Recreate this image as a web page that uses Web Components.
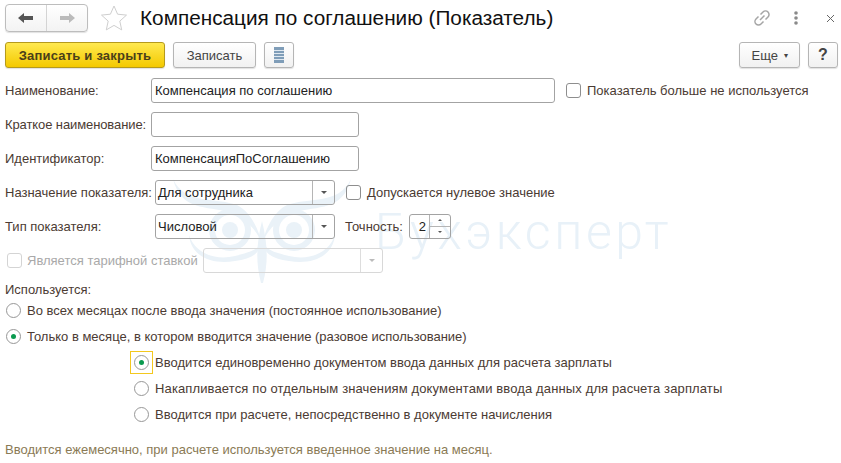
<!DOCTYPE html>
<html>
<head>
<meta charset="utf-8">
<style>
  html, body { margin: 0; background: #fff; }
  body { font: 13px "Liberation Sans", sans-serif; color: #4b3b33; }
</style>
</head>
<body>
<metric-form></metric-form>
<script>
const ICON_ARROW_L = `<svg width="18" height="14" viewBox="0 0 18 14"><path d="M1 7 7 2v3h9v4H7v3z" fill="#555"/></svg>`;
const ICON_ARROW_R = `<svg width="18" height="14" viewBox="0 0 18 14"><path d="M17 7 11 2v3H2v4h9v3z" fill="#bbb"/></svg>`;
const OWL_HALF = `
    <circle cx="65" cy="55" r="18" fill="none" stroke="#eaf2f8" stroke-width="6"/>
    <circle cx="65" cy="55" r="8"/>
    <path d="M8 4C20 30 50 22 72 30 84 36 92 50 97 68 90 52 78 42 64 37 42 31 16 36 8 4Z"/>
    <path d="M24 60C30 78 50 86 70 81 82 78 90 76 95 70 94 80 84 84 70 86 48 90 26 82 24 60Z"/>`;

class UiButton extends HTMLElement {
    constructor(){
        super();
        this.attachShadow({mode:'open'});
        this.shadowRoot.innerHTML = `
        <style>
            :host{
                display: inline-flex;
                align-items: center;
                justify-content: center;
                box-sizing: border-box;
                height: 26px;
                border: 1px solid #b5b5b5;
                border-radius: 3px;
                background: linear-gradient(#fff, #f1f1f1);
                color: #444;
                font: 13px "Liberation Sans", sans-serif;
                box-shadow: 0 1px 1px rgba(0,0,0,.12);
            }
            :host([primary]){
                background: linear-gradient(#ffe94f, #f4c900);
                border-color: #b59a1c;
                color: #4a3f1a;
                font-weight: 700;
                letter-spacing: .2px;
            }
        </style>
        <slot></slot>`;
    }
}

class ComboBox extends HTMLElement {
    constructor(){
        super();
        this.attachShadow({mode:'open'});
        this.shadowRoot.innerHTML = `
        <style>
            :host{
                display: inline-flex;
                box-sizing: border-box;
                height: 25px;
                border: 1px solid #a3a3a3;
                border-radius: 3px;
                color: #222;
                font: 13px "Liberation Sans", sans-serif;
            }
            :host([disabled]){ border-color: #d8d8d8; }
            .val{ flex: 1; padding: 0 2px; line-height: 23px; white-space: nowrap; }
            .btn{
                width: 21px;
                border-left: 1px solid #b5b5b5;
                display: flex;
                align-items: center;
                justify-content: center;
            }
            :host([disabled]) .btn{ border-color: #ddd; }
            .btn i{
                border: 3px solid transparent;
                border-top: 3px solid #555;
                border-bottom: 0;
            }
            :host([disabled]) .btn i{ border-top-color: #bbb; }
        </style>
        <div class="val"><slot></slot></div>
        <div class="btn"><i></i></div>`;
    }
}

class TextField extends HTMLElement {
    constructor(){
        super();
        this.attachShadow({mode:'open'});
        this.shadowRoot.innerHTML = `
        <style>
            :host{
                display: block;
                box-sizing: border-box;
                height: 25px;
                border: 1px solid #a3a3a3;
                border-radius: 3px;
                padding: 0 3px;
                color: #222;
                font: 13px/23px "Liberation Sans", sans-serif;
                white-space: nowrap;
            }
        </style>
        <slot></slot>`;
    }
}

class SpinField extends HTMLElement {
    constructor(){
        super();
        this.attachShadow({mode:'open'});
        this.shadowRoot.innerHTML = `
        <style>
            :host{
                display: inline-flex;
                box-sizing: border-box;
                height: 25px;
                border: 1px solid #a3a3a3;
                border-radius: 3px;
                color: #222;
                font: 13px/23px "Liberation Sans", sans-serif;
            }
            .val{ flex: 1; text-align: right; padding-right: 3px; }
            .btns{ width: 20px; border-left: 1px solid #b5b5b5; display: flex; flex-direction: column; }
            .btns div{ flex: 1; display: flex; align-items: center; justify-content: center; }
            .btns div + div{ border-top: 1px solid #b5b5b5; }
            .up{ border: 2px solid transparent; border-bottom: 2px solid #555; border-top: 0; }
            .down{ border: 2px solid transparent; border-top: 2px solid #555; border-bottom: 0; }
        </style>
        <div class="val"><slot></slot></div>
        <div class="btns"><div><i class="up"></i></div><div><i class="down"></i></div></div>`;
    }
}

class CheckField extends HTMLElement {
    constructor(){
        super();
        this.attachShadow({mode:'open'});
        this.shadowRoot.innerHTML = `
        <style>
            :host{
                display: inline-flex;
                align-items: center;
                gap: 6px;
                height: 25px;
                font: 13px "Liberation Sans", sans-serif;
                color: #4b3b33;
                white-space: nowrap;
            }
            :host([disabled]){ color: #a9a9a9; gap: 5px; }
            .box{
                box-sizing: border-box;
                width: 15px;
                height: 15px;
                border: 1px solid #8e8e8e;
                border-radius: 3px;
            }
            :host([disabled]) .box{ border-color: #d4d4d4; }
        </style>
        <span class="box"></span><slot></slot>`;
    }
}

class RadioField extends HTMLElement {
    constructor(){
        super();
        this.attachShadow({mode:'open'});
        this.shadowRoot.innerHTML = `
        <style>
            :host{
                display: flex;
                align-items: center;
                height: 26px;
                gap: 2px;
                font: 13px "Liberation Sans", sans-serif;
                color: #4b3b33;
                white-space: nowrap;
            }
            .wrap{
                box-sizing: border-box;
                width: 23px;
                height: 23px;
                margin-left: -3px;
                display: flex;
                align-items: center;
                justify-content: center;
                border: 1px solid transparent;
            }
            :host([focused]) .wrap{ border-color: #f3c81e; }
            .dot{
                box-sizing: border-box;
                width: 15px;
                height: 15px;
                border: 1px solid #979797;
                border-radius: 50%;
                display: flex;
                align-items: center;
                justify-content: center;
            }
            :host([checked]) .dot::after{
                content: '';
                width: 5px;
                height: 5px;
                border-radius: 50%;
                background: #0a9a4f;
            }
        </style>
        <span class="wrap"><span class="dot"></span></span><slot></slot>`;
    }
}

class MetricForm extends HTMLElement {
    constructor(){
        super();
        this.attachShadow({mode:'open'});
        this.shadowRoot.innerHTML = `
        <style>
            :host{
                display: block;
                position: relative;
                width: 841px;
                height: 463px;
                overflow: hidden;
                font: 13px "Liberation Sans", sans-serif;
                color: #4b3b33;
            }
            .mark{ position: absolute; left: 165px; top: 175px; }
            .mark-text{
                position: absolute; left: 375px; top: 203px;
                font: 300 50px Roboto, "Liberation Sans", sans-serif;
                letter-spacing: 3.6px;
                color: #e8f1f8;
            }
            .content{ position: relative; padding: 4px 3px 0 5px; }
            .head{ display: flex; align-items: center; height: 28px; }
            .nav{
                display: flex;
                box-sizing: border-box;
                width: 83px; height: 28px;
                border: 1px solid #bdbdbd;
                border-radius: 4px;
                background: linear-gradient(#fff, #f3f3f3);
                box-shadow: 0 1px 1px rgba(0,0,0,.12);
            }
            .nav div{ flex: 1; display: flex; align-items: center; justify-content: center; }
            .nav div + div{ border-left: 1px solid #d4d4d4; }
            .star{ margin-left: 12px; }
            h1{
                margin: 0 0 0 12px;
                font: 400 20.75px "Liberation Sans", sans-serif;
                color: #111;
                white-space: nowrap;
            }
            .head-tools{ margin-left: auto; display: flex; align-items: center; padding-right: 3px; }
            .head-tools .dots{ margin-left: 22px; }
            .head-tools .close{ margin-left: 28px; }
            .bar{ display: flex; align-items: center; margin-top: 10px; height: 26px; }
            .bar .right{ margin-left: auto; display: flex; gap: 8px; }
            .rows{ margin-top: 5px; }
            .row{ display: flex; align-items: center; height: 34px; white-space: nowrap; }
            .lbl{ width: 146px; flex: none; }
            .gap{ margin-left: 4px; }
        </style>
        <svg class="mark" width="190" height="115" viewBox="0 0 190 115" fill="#eaf2f8">
            <g>${OWL_HALF}</g>
            <g transform="translate(194,0) scale(-1,1)">${OWL_HALF}</g>
            <path d="M97 46C102 66 104 86 98 108H96C90 86 92 66 97 46Z"/>
        </svg>
        <div class="mark-text">Бухэксперт</div>
        <div class="content">
            <div class="head">
                <div class="nav"><div>${ICON_ARROW_L}</div><div>${ICON_ARROW_R}</div></div>
                <svg class="star" width="28" height="28" viewBox="0 0 28 28"><path d="M14 2l3.600 8.200 8.900.9-6.700 6 1.900 8.800L14 21.400 6.300 25.900l1.900-8.800-6.700-6 8.900-.9z" fill="none" stroke="#cfcfcf"/></svg>
                <h1>Компенсация по соглашению (Показатель)</h1>
                <div class="head-tools">
                    <svg width="20" height="20" viewBox="0 0 20 20" fill="none" stroke="#a5a5a5" stroke-width="1.500"><path d="M8 12 12.500 7.500M8.500 6.500l2.500-2.500a3.200 3.200 0 0 1 5 5l-2.500 2.500M11.500 13.500 9 16a3.200 3.200 0 0 1-5-5l2.500-2.500"/></svg>
                    <svg class="dots" width="4" height="14" viewBox="0 0 4 14" fill="#8a8a8a"><circle cx="2" cy="2" r="1.800"/><circle cx="2" cy="7" r="1.800"/><circle cx="2" cy="12" r="1.800"/></svg>
                    <svg class="close" width="9" height="9" viewBox="0 0 9 9" stroke="#666"><path d="M1 1l7 7M8 1 1 8"/></svg>
                </div>
            </div>
            <div class="bar">
                <ui-button primary style="width:160px">Записать и закрыть</ui-button>
                <ui-button style="width:83px;margin-left:8px">Записать</ui-button>
                <ui-button style="width:30px;margin-left:8px">
                    <svg width="10" height="16" viewBox="0 0 10 16"><rect width="10" height="16" fill="#7f9db8"/><path d="M0 3.500h10M0 6.500h10M0 9.500h10M0 12.500h10" stroke="#dfe8f0"/></svg>
                </ui-button>
                <div class="right">
                    <ui-button style="width:61px">Еще&nbsp;<span style="font-size:8px;margin-left:2px">▾</span></ui-button>
                    <ui-button style="width:30px;font-weight:700;font-size:16px">?</ui-button>
                </div>
            </div>
            <div class="rows">
                <div class="row">
                    <span class="lbl">Наименование:</span>
                    <text-field style="width:404px">Компенсация по соглашению</text-field>
                    <check-field style="margin-left:11px">Показатель больше не используется</check-field>
                </div>
                <div class="row">
                    <span class="lbl" style="letter-spacing:-.1px">Краткое наименование:</span>
                    <text-field style="width:208px"></text-field>
                </div>
                <div class="row">
                    <span class="lbl">Идентификатор:</span>
                    <text-field style="width:208px">КомпенсацияПоСоглашению</text-field>
                </div>
                <div class="row">
                    <span class="lbl">Назначение показателя:</span>
                    <combo-box class="gap" style="width:180px">Для сотрудника</combo-box>
                    <check-field style="margin-left:11px">Допускается нулевое значение</check-field>
                </div>
                <div class="row">
                    <span class="lbl">Тип показателя:</span>
                    <combo-box class="gap" style="width:180px">Числовой</combo-box>
                    <span style="margin-left:10px">Точность:</span>
                    <spin-field style="width:42px;margin-left:6px">2</spin-field>
                </div>
                <div class="row">
                    <check-field disabled style="width:196px;margin-left:2px">Является тарифной ставкой</check-field>
                    <combo-box disabled style="width:180px"></combo-box>
                </div>
            </div>
            <div style="margin-top:5px">Используется:</div>
            <radio-field>Во всех месяцах после ввода значения (постоянное использование)</radio-field>
            <radio-field checked>Только в месяце, в котором вводится значение (разовое использование)</radio-field>
            <div style="margin-left:128px">
                <radio-field checked focused>Вводится единовременно документом ввода данных для расчета зарплаты</radio-field>
                <radio-field style="letter-spacing:.13px">Накапливается по отдельным значениям документами ввода данных для расчета зарплаты</radio-field>
                <radio-field>Вводится при расчете, непосредственно в документе начисления</radio-field>
            </div>
            <div style="margin-top:15px;color:#8a7a55">Вводится ежемесячно, при расчете используется введенное значение на месяц.</div>
        </div>
        `;
    }
}

customElements.define('ui-button', UiButton);
customElements.define('combo-box', ComboBox);
customElements.define('text-field', TextField);
customElements.define('spin-field', SpinField);
customElements.define('check-field', CheckField);
customElements.define('radio-field', RadioField);
customElements.define('metric-form', MetricForm);
</script>
</body>
</html>
